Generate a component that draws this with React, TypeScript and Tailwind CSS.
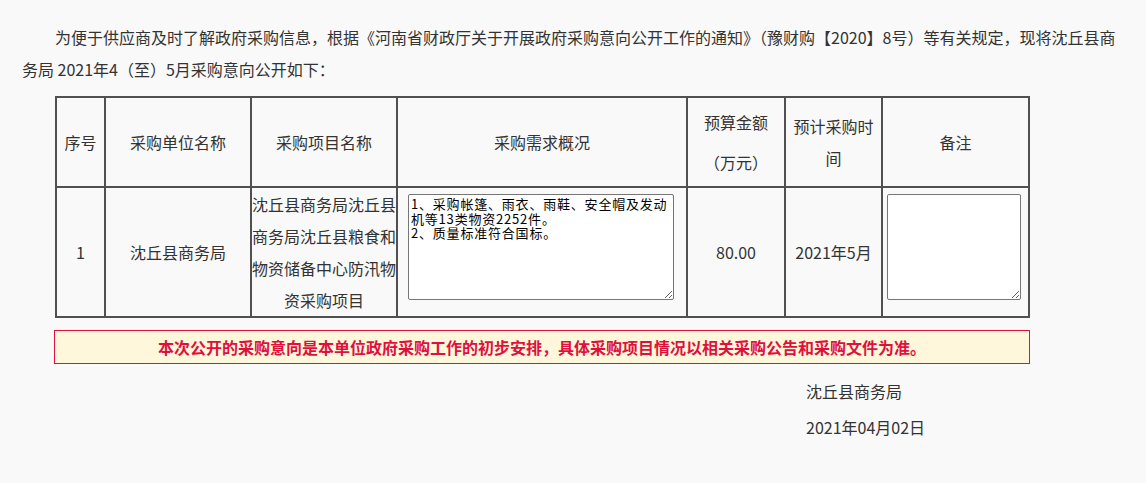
import React from 'react';

const cell = 'border-2 border-[#505050] text-center align-middle';

export default function App() {
  return (
    <div
      className="min-h-screen bg-[#f9f9f9] text-[#333] text-[16px] pt-[21px]"
      style={{ fontFamily: '"Microsoft YaHei", "Noto Sans CJK SC", "Noto Sans", sans-serif' }}
    >
      {/* Intro */}
      <p className="pl-[22px] pr-[18px] leading-[32px] indent-[33px]">
        为便于供应商及时了解政府采购信息，根据《河南省财政厅关于开展政府采购意向公开工作的通知》（豫财购【2020】8号）等有关规定，现将沈丘县商务局 2021年4（至）5月采购意向公开如下：
      </p>

      {/* Table */}
      <table className="ml-[55px] mt-[11px] border-collapse table-fixed w-[973px]">
        <colgroup>
          <col className="w-[49px]" />
          <col className="w-[146px]" />
          <col className="w-[146px]" />
          <col className="w-[290px]" />
          <col className="w-[98px]" />
          <col className="w-[97px]" />
          <col className="w-[147px]" />
        </colgroup>
        <tbody>
          <tr className="h-[90px]">
            <td className={cell}>序号</td>
            <td className={cell}>采购单位名称</td>
            <td className={cell}>采购项目名称</td>
            <td className={cell}>采购需求概况</td>
            <td className={cell}>
              <p className="leading-[40px]">预算金额</p>
              <p className="leading-[40px]">（万元）</p>
            </td>
            <td className={`${cell} px-[2px] leading-[32px]`}>预计采购时间</td>
            <td className={cell}>备注</td>
          </tr>
          <tr className="h-[130px]">
            <td className={cell}>1</td>
            <td className={cell}>沈丘县商务局</td>
            <td className={`${cell} leading-[32px]`}>沈丘县商务局沈丘县商务局沈丘县粮食和物资储备中心防汛物资采购项目</td>
            <td className="border-2 border-[#505050] align-top pt-[6px] px-[10px]">
              <textarea
                readOnly
                className="block w-[266px] h-[106px] bg-white border border-[#767676] rounded-[2px] px-[2px] py-[2px] text-[13px] leading-[14.5px] tracking-[0.8px] text-black resize"
                style={{ fontFamily: '"Noto Sans CJK SC", "DejaVu Sans Mono", monospace' }}
                defaultValue={'1、采购帐篷、雨衣、雨鞋、安全帽及发动机等13类物资2252件。\n2、质量标准符合国标。'}
              />
            </td>
            <td className={cell}>80.00</td>
            <td className={cell}>2021年5月</td>
            <td className="border-2 border-[#505050] align-top pt-[6px] px-[4px]">
              <textarea
                readOnly
                className="block w-[134px] h-[106px] bg-white border border-[#767676] rounded-[2px] resize"
              />
            </td>
          </tr>
        </tbody>
      </table>

      {/* Notice */}
      <div className="ml-[54px] mt-[12px] w-[976px] h-[34px] border border-[#e0103c] bg-[#fef7dc] flex items-center justify-center">
        <span className="font-bold text-[#e0103c]">
          本次公开的采购意向是本单位政府采购工作的初步安排，具体采购项目情况以相关采购公告和采购文件为准。
        </span>
      </div>

      {/* Signature */}
      <div className="ml-[806px] mt-[9px] leading-[36px]">
        <p>沈丘县商务局</p>
        <p>2021年04月02日</p>
      </div>
    </div>
  );
}
